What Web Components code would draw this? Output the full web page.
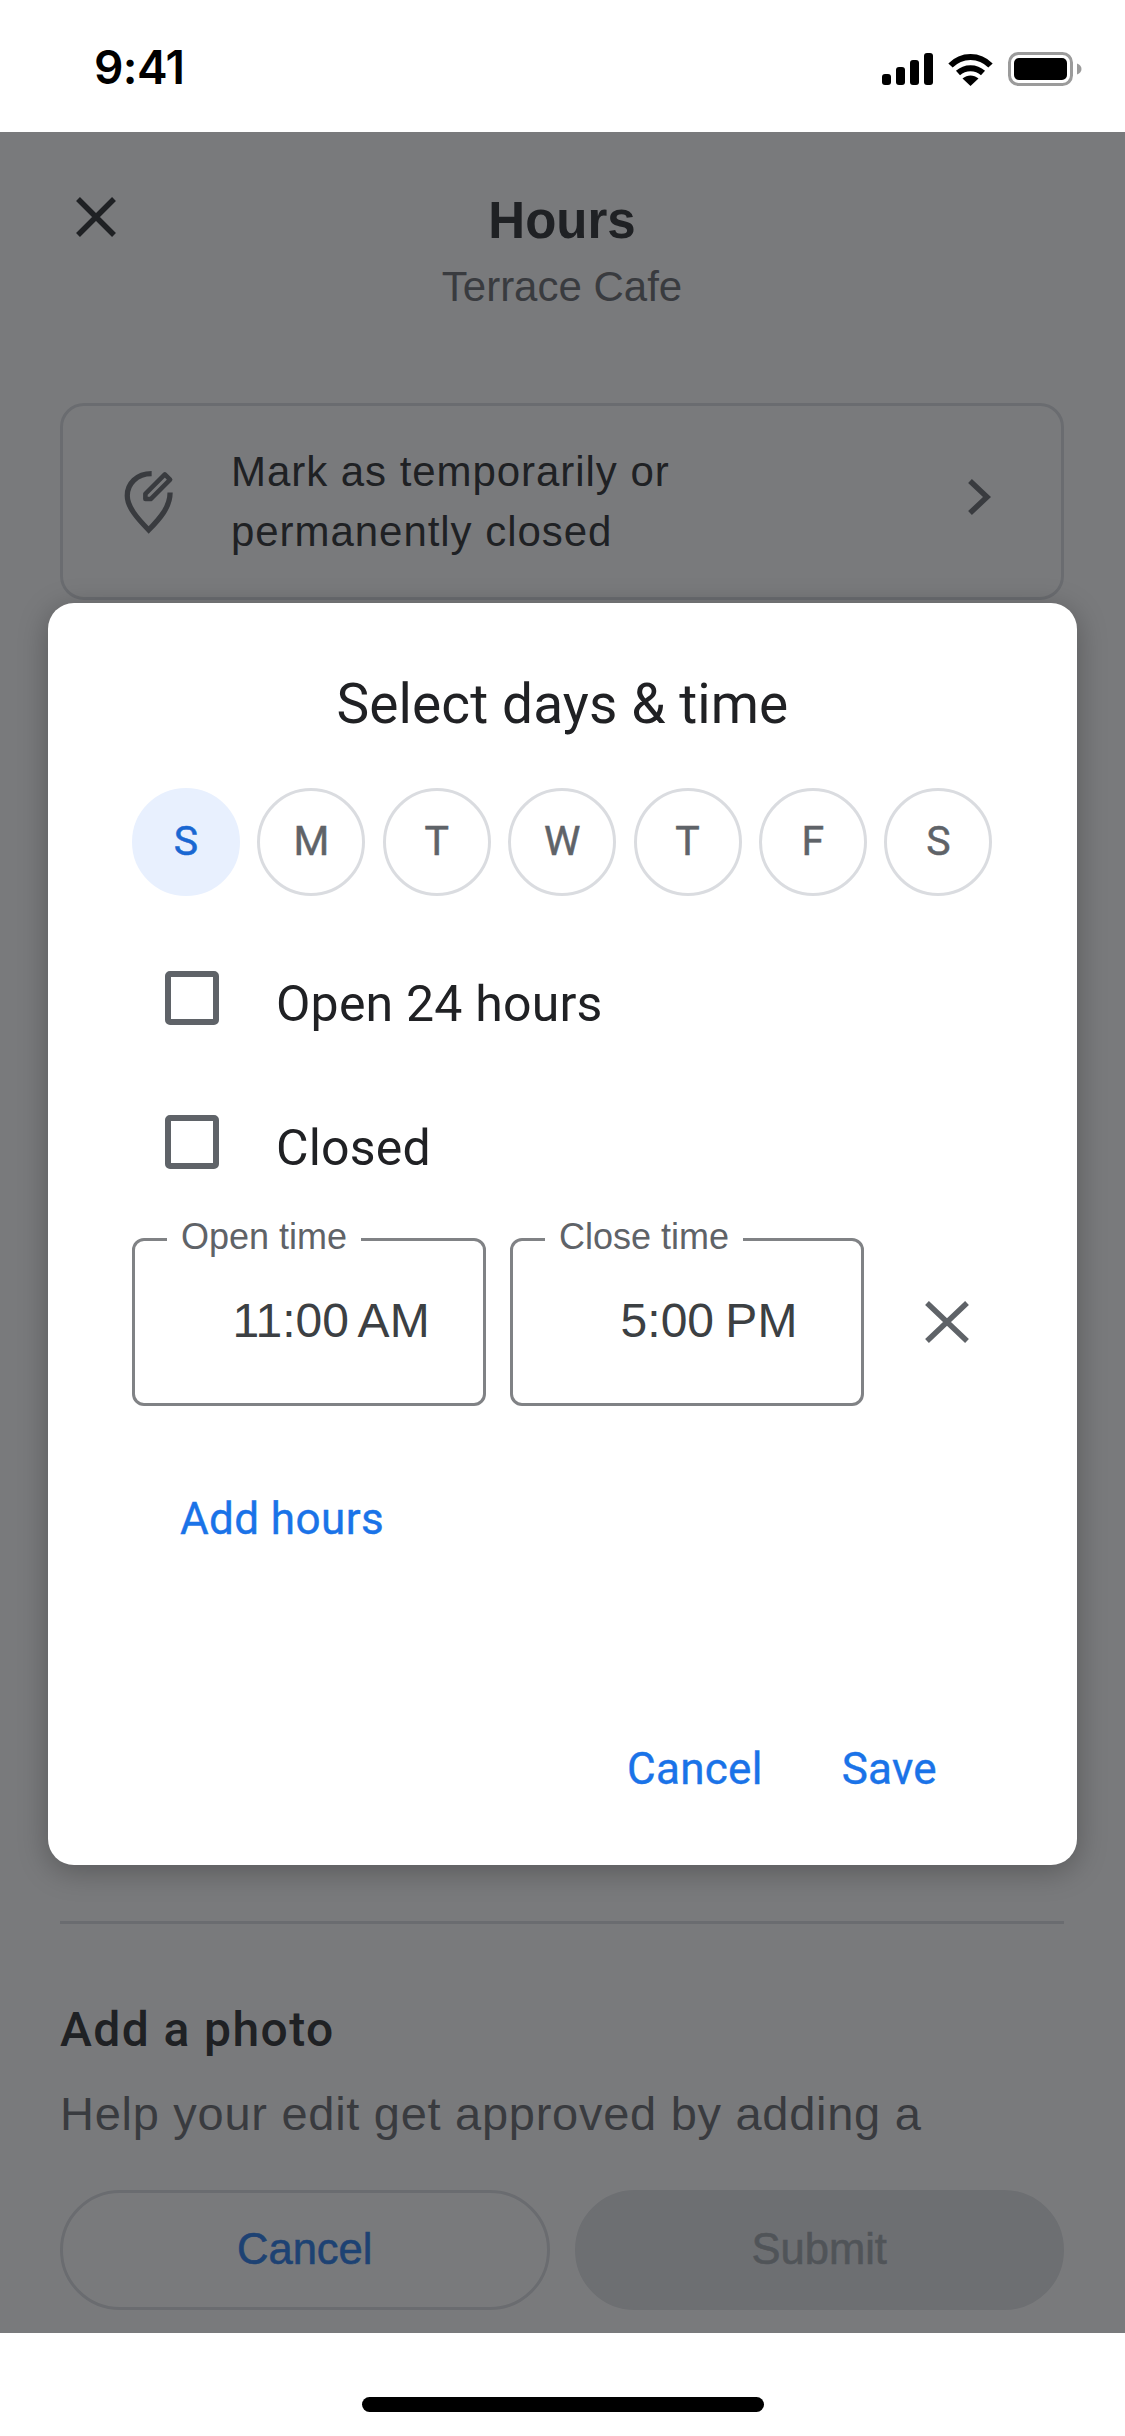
<!DOCTYPE html>
<html lang="en">
<head>
<meta charset="utf-8">
<title>Hours</title>
<style>
  html, body { margin: 0; padding: 0; background: #fff; }
  body { width: 1125px; height: 2436px; font-family: "Liberation Sans", Arial, sans-serif; }
  hours-screen { display: block; }
</style>
</head>
<body>
<hours-screen>
  <status-bar slot="top" time="9:41"></status-bar>
  <edit-sheet slot="sheet" title="Hours" subtitle="Terrace Cafe"></edit-sheet>
  <hours-dialog slot="dialog"></hours-dialog>
  <home-bar slot="bottom"></home-bar>
</hours-screen>

<script>
(function () {
  var SANS = '"Liberation Sans", Arial, sans-serif';
  var GEO = 'Roboto, "Liberation Sans", sans-serif';

  function define(name, css, html) {
    customElements.define(name, class extends HTMLElement {
      connectedCallback() {
        if (this.shadowRoot) return;
        var root = this.attachShadow({ mode: 'open' });
        var body = typeof html === 'function' ? html(this) : html;
        root.innerHTML = '<style>' + css + '</style>' + body;
      }
    });
  }

  define('hours-screen', "\
:host{display:flex;flex-direction:column;width:1125px;height:2436px;overflow:hidden;background:#fff}\
.main{position:relative;height:2201px;overflow:hidden}\
.scrim{position:absolute;inset:0;background:rgba(32,33,36,.6)}\
", '<slot name="top"></slot><div class="main"><slot name="sheet"></slot><div class="scrim"><slot name="dialog"></slot></div></div><slot name="bottom"></slot>');

  define('status-bar', "\
:host{display:flex;align-items:center;justify-content:space-between;height:132px;box-sizing:border-box;padding:0 43px 0 94px;background:#fff}\
.time{font:600 46px/1 Inter," + SANS + ";color:#000;width:92px;white-space:nowrap;letter-spacing:-.6px;position:relative;top:1px}\
.icons{display:flex;align-items:center;gap:15px;position:relative;top:3px}\
svg{display:block}\
", function (el) {
    return '<span class="time">' + el.getAttribute('time') + '</span><span class="icons">' +
      '<svg width="51" height="32" viewBox="0 0 51 32"><g fill="#000"><rect x="0" y="21" width="9" height="11" rx="3"/><rect x="14" y="14" width="9" height="18" rx="3"/><rect x="28" y="7" width="9" height="25" rx="3"/><rect x="42" y="0" width="9" height="32" rx="3"/></g></svg>' +
      '<svg width="45" height="33" viewBox="0 0 45 33"><g fill="none" stroke="#000" stroke-width="6"><path d="M2.5 12.5C13.5 1 31.5 1 42.5 12.5"/><path d="M10 20C17 13.6 28 13.6 35 20"/></g><path d="M14.500 25.500C19.500 21.500 25.500 21.500 30.500 25.500L22.500 33Z" fill="#000"/></svg>' +
      '<svg width="74" height="34" viewBox="0 0 74 34"><rect x="1.500" y="1.500" width="62" height="31" rx="9" fill="none" stroke="#9b9b9b" stroke-width="3"/><rect x="6" y="6" width="53" height="22" rx="5" fill="#000"/><path d="M69 11.500C72 12.500 73.500 14.500 73.500 17C73.500 19.500 72 21.500 69 22.500Z" fill="#9b9b9b"/></svg>' +
      '</span>';
  });

  define('edit-sheet', "\
:host{display:flex;flex-direction:column;height:2201px;box-sizing:border-box;padding:0 61px 23px 60px;background:#fff;position:relative}\
.close{position:absolute;left:75px;top:64px}\
header{text-align:center;padding-top:59px}\
h1{margin:0;font:700 51px/60px " + SANS + ";color:#202124}\
.sub{font:400 42px/50px " + SANS + ";color:#5f6368;margin-top:11px}\
section{margin-top:auto}\
hr{border:0;height:3px;background:#dadce0;margin:0}\
h2{margin:78px 0 0;font:500 48px/56px " + GEO + ";color:#202124;letter-spacing:1.4px}\
p{margin:28px 0 0;font:400 47px/56px " + SANS + ";color:#5f6368;white-space:nowrap;overflow:hidden;letter-spacing:.72px}\
.foot{margin-top:48px;display:flex;gap:25px}\
", function (el) {
    return '<svg class="close" width="42" height="42" viewBox="0 0 42 42"><path d="M3 3L39 39M39 3L3 39" stroke="#202124" stroke-width="5.500" fill="none"/></svg>' +
      '<header><h1>' + el.getAttribute('title') + '</h1><div class="sub">' + el.getAttribute('subtitle') + '</div></header>' +
      '<notice-card>Mark as temporarily or permanently closed</notice-card>' +
      '<section><hr><h2>Add a photo</h2><p>Help your edit get approved by adding a</p></section>' +
      '<div class="foot"><pill-button>Cancel</pill-button><pill-button disabled>Submit</pill-button></div>';
  });

  define('notice-card', "\
:host{display:flex;align-items:center;box-sizing:border-box;height:197px;margin-top:91px;border:3px solid #dadce0;border-radius:24px;padding:0 70px 0 59px;position:relative}\
.txt{width:480px;margin-left:53px;font:400 42px/60px " + SANS + ";color:#202124;letter-spacing:.95px}\
.chev{margin-left:auto;position:relative;top:-5px}\
svg{display:block;flex:none}\
", '<svg width="56" height="68" viewBox="60 80 170 206"><path d="M150 97C104 97 76 128 76 164C76 198 106 232 141 268C176 232 206 198 206 154" fill="none" stroke="#5f6368" stroke-width="16"/><path d="M131 174L131 158L190 99L206 115L147 174Z" fill="none" stroke="#5f6368" stroke-width="14" stroke-linejoin="round"/></svg>' +
    '<div class="txt"><slot></slot></div>' +
    '<svg class="chev" width="24" height="38" viewBox="0 0 24 38"><path d="M3 3L20 19L3 35" fill="none" stroke="#5f6368" stroke-width="5.500"/></svg>');

  define('pill-button', "\
:host{flex:1;display:flex;align-items:center;justify-content:center;box-sizing:border-box;height:120px;border-radius:60px;border:3px solid #dadce0;font:400 43.500px/1 " + SANS + ";color:#1a73e8;-webkit-text-stroke:.6px currentColor}\
:host([disabled]){background:#e1e3e6;border-color:#e1e3e6;color:#9aa0a6}\
", '<slot></slot>');

  define('hours-dialog', "\
:host{position:absolute;left:48px;top:471px;width:1029px;height:1262px;box-sizing:border-box;padding-top:68px;background:#fff;border-radius:26px;box-shadow:0 6px 30px rgba(0,0,0,.28);display:flex;flex-direction:column}\
h3{margin:0;text-align:center;font:400 55px/66px " + GEO + ";color:#202124;letter-spacing:.1px}\
.days{display:flex;gap:17.400px;margin:51px 0 0 84px}\
.checks{display:flex;flex-direction:column;gap:90px;margin:75px 0 0 117px}\
.times{display:flex;align-items:center;margin:69px 0 0 84px;gap:24px}\
.rm{margin-left:37px;display:block}\
.add{margin:88px 0 0 132px;font:400 44px/50px " + GEO + ";color:#1a73e8;letter-spacing:.4px;-webkit-text-stroke:.4px currentColor}\
.acts{margin-top:auto;padding:0 140px 71px 0;display:flex;justify-content:flex-end;gap:79px;font:400 44px/50px " + GEO + ";color:#1a73e8;letter-spacing:.3px;-webkit-text-stroke:.4px currentColor}\
", '<h3>Select days &amp; time</h3>' +
    '<div class="days"><day-chip selected>S</day-chip><day-chip>M</day-chip><day-chip>T</day-chip><day-chip>W</day-chip><day-chip>T</day-chip><day-chip>F</day-chip><day-chip>S</day-chip></div>' +
    '<div class="checks"><check-row>Open 24 hours</check-row><check-row>Closed</check-row></div>' +
    '<div class="times"><time-field label="Open time" value="11:00 AM"></time-field><time-field label="Close time" value="5:00 PM"></time-field>' +
    '<svg class="rm" width="44" height="42" viewBox="0 0 44 42"><path d="M2 2L42 40M42 2L2 40" stroke="#5f6368" stroke-width="5.500" fill="none"/></svg></div>' +
    '<div class="add">Add hours</div>' +
    '<div class="acts"><span>Cancel</span><span>Save</span></div>');

  define('day-chip', "\
:host{flex:none;display:flex;align-items:center;justify-content:center;box-sizing:border-box;width:108px;height:108px;padding-bottom:2px;border-radius:50%;border:3px solid #dadce0;font:400 41px/1 " + GEO + ";color:#5f6368;-webkit-text-stroke:.5px currentColor}\
:host([selected]){background:#e8f0fe;border-color:#e8f0fe;color:#1967d2}\
", '<slot></slot>');

  define('check-row', "\
:host{display:flex;align-items:flex-start;height:54px;font:400 50px/54px " + GEO + ";color:#202124;letter-spacing:.2px}\
.box{flex:none;box-sizing:border-box;width:54px;height:54px;border:6px solid #5f6368;border-radius:5px;margin-right:57px}\
.lbl{position:relative;top:6px;white-space:nowrap}\
", '<span class="box"></span><span class="lbl"><slot></slot></span>');

  define('time-field', "\
:host{display:block;position:relative;box-sizing:border-box;width:354px;height:168px;border:3px solid #808285;border-radius:12px;text-align:center;padding:40px 0 0 44px;font:400 48px/80px " + SANS + ";color:#3c4043;word-spacing:-2px}\
.lg{position:absolute;left:32px;top:-24px;padding:0 14px;background:#fff;font:400 36px/40px " + SANS + ";color:#5f6368;white-space:nowrap;word-spacing:0}\
", function (el) {
    return '<span class="lg">' + el.getAttribute('label') + '</span>' + el.getAttribute('value');
  });

  define('home-bar', "\
:host{display:flex;justify-content:center;align-items:flex-start;height:103px;box-sizing:border-box;padding-top:64px;background:#fff}\
i{display:block;width:402px;height:15px;border-radius:8px;background:#000}\
", '<i></i>');
})();
</script>
</body>
</html>
